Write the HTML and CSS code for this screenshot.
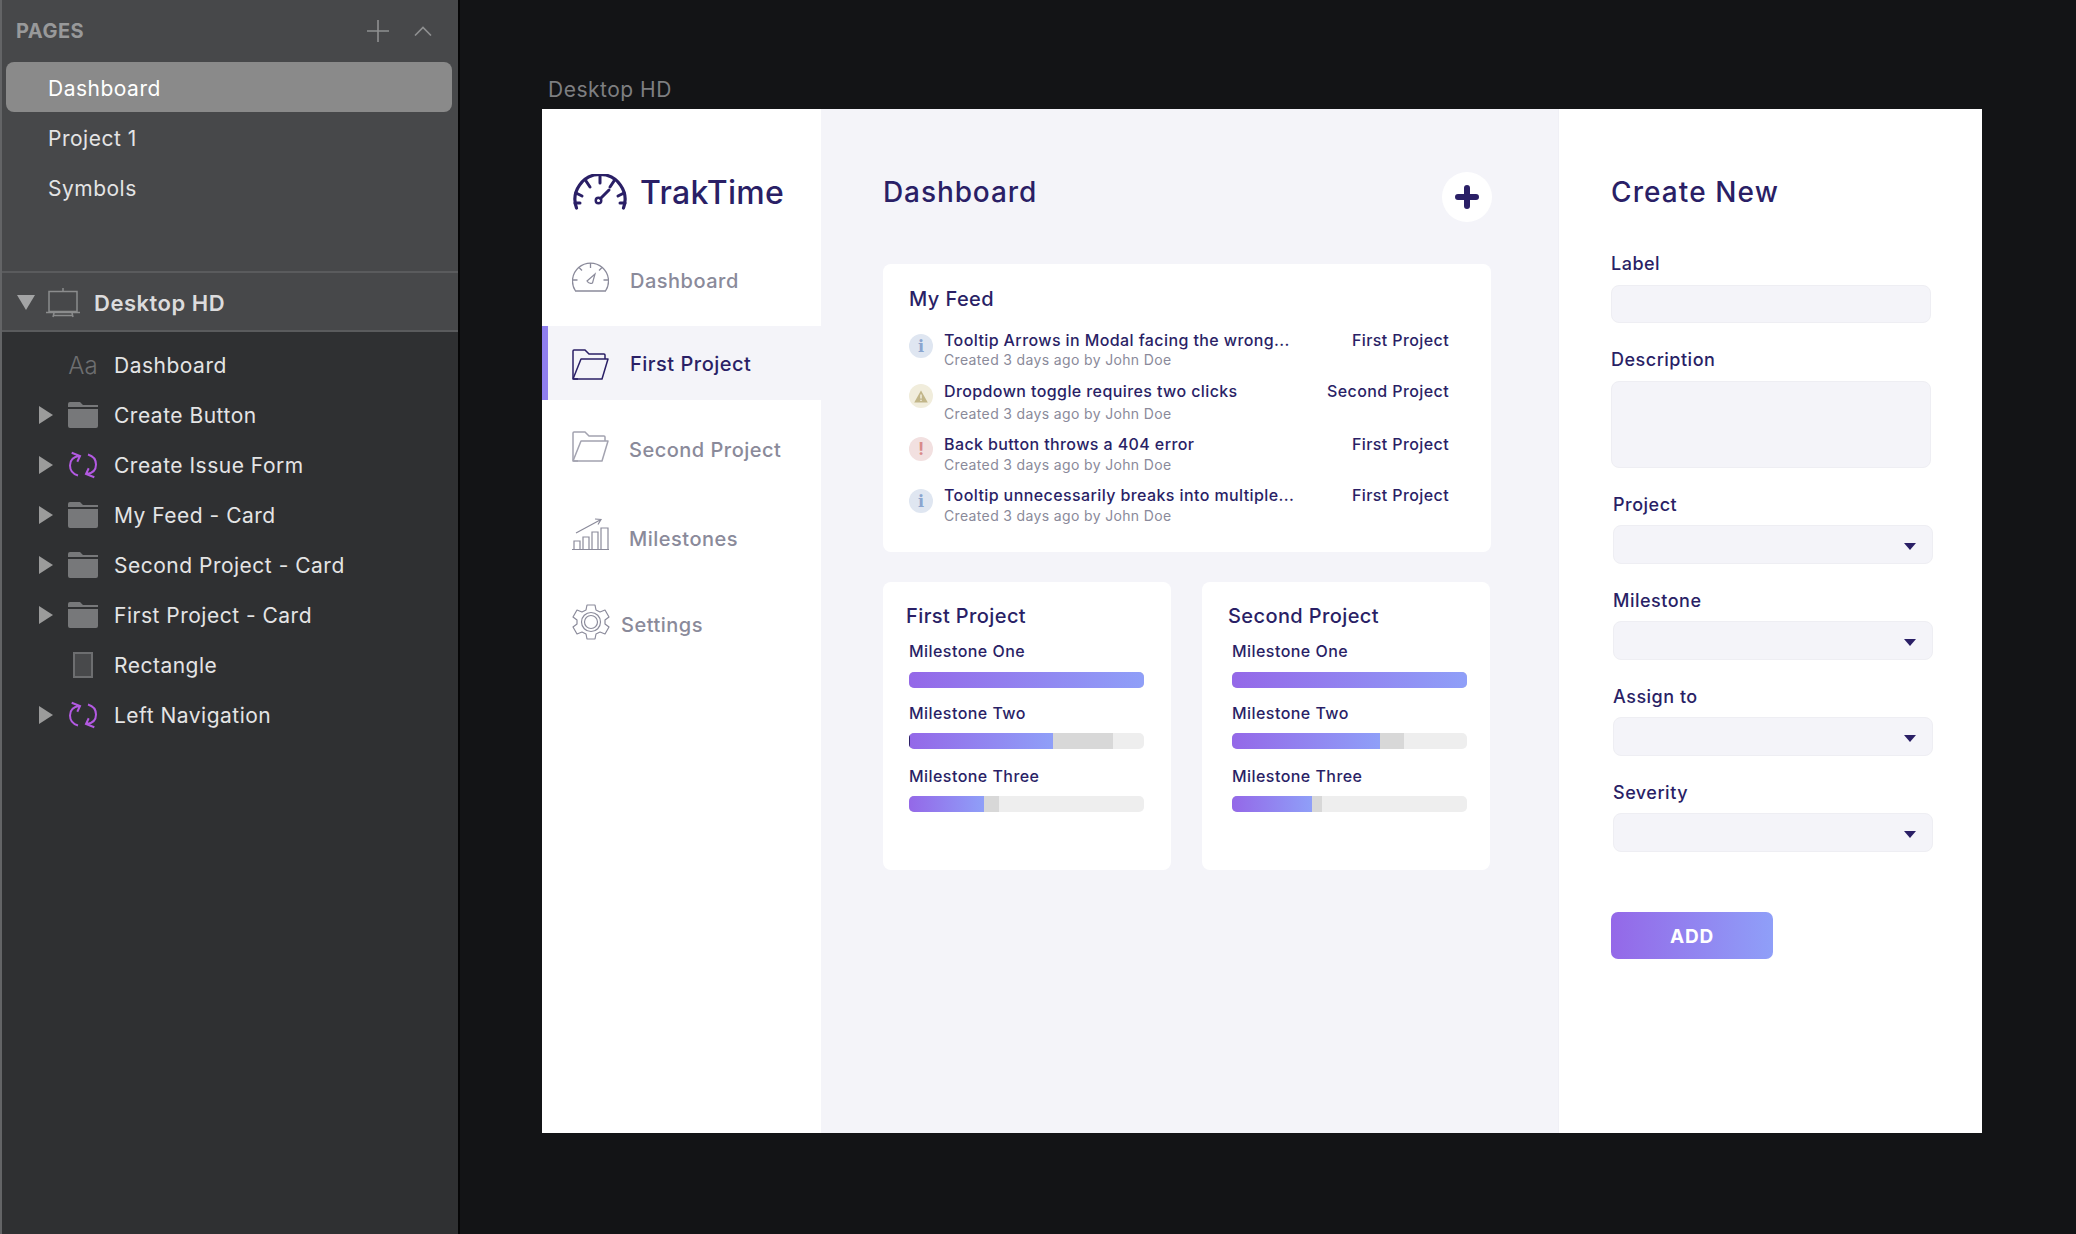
FILE: index.html
```html
<!DOCTYPE html>
<html lang="en">
<head>
    <meta charset="UTF-8">
    <meta name="viewport" content="width=device-width, initial-scale=1.0">
    <title>TrakTime - Desktop HD</title>
    <link rel="stylesheet" href="styles.css">
</head>
<body>
    <aside class="layers">
        <div class="pages">
            <div class="pages-head">
                <span class="pages-title">PAGES</span>
                <svg class="pages-plus" width="22" height="22" viewBox="0 0 22 22"><path d="M11 0V22M0 11H22" stroke="#8f9091" stroke-width="1.6" fill="none"/></svg>
                <svg class="pages-up" width="18" height="10" viewBox="0 0 18 10"><path d="M1 9.5L9 1.5L17 9.5" stroke="#8f9091" stroke-width="1.6" fill="none"/></svg>
            </div>
            <div class="page page-active">Dashboard</div>
            <div class="page">Project 1</div>
            <div class="page">Symbols</div>
        </div>
        <div class="artboard-row">
            <svg class="artboard-arrow" width="18" height="15" viewBox="0 0 18 15"><path d="M0 0H18L9 15Z" fill="#a3a4a5"/></svg>
            <svg class="artboard-icon" width="34" height="31" viewBox="0 0 34 31">
                <path d="M3 4.5H31V24.5H3Z" stroke="#8b8c8d" stroke-width="1.5" fill="none"/>
                <path d="M17 1V4M0 25.5H34M8 26L7 30M26 26L27 30M7.5 28.5H26.5" stroke="#8b8c8d" stroke-width="1.5" fill="none"/>
            </svg>
            <span>Desktop HD</span>
        </div>
        <ul class="tree">
            <li class="tree-row"><span class="tree-aa">Aa</span>Dashboard</li>
            <li class="tree-row has-arrow">
                <svg class="tree-icon" width="30" height="26" viewBox="0 0 30 26"><path d="M0 2Q0 0 2 0H12L15 3H30V5H0ZM0 7H30V24Q30 26 28 26H2Q0 26 0 24Z" fill="#77787a"/></svg>
                Create Button
            </li>
            <li class="tree-row has-arrow">
                <svg class="tree-icon" width="30" height="28" viewBox="0 0 30 28"><path d="M11 5C4 6 2 10 2 14.5C2 19 5 23 10 24.5M3.700 1.700L12 5L9.300 10.700M19 23C26 22 28 18 28 13.500C28 9 25 5 20 3.500M26.300 26.300L18 23L20.700 17.300" stroke="#b35ae2" stroke-width="2" fill="none"/></svg>
                Create Issue Form
            </li>
            <li class="tree-row has-arrow">
                <svg class="tree-icon" width="30" height="26" viewBox="0 0 30 26"><path d="M0 2Q0 0 2 0H12L15 3H30V5H0ZM0 7H30V24Q30 26 28 26H2Q0 26 0 24Z" fill="#77787a"/></svg>
                My Feed - Card
            </li>
            <li class="tree-row has-arrow">
                <svg class="tree-icon" width="30" height="26" viewBox="0 0 30 26"><path d="M0 2Q0 0 2 0H12L15 3H30V5H0ZM0 7H30V24Q30 26 28 26H2Q0 26 0 24Z" fill="#77787a"/></svg>
                Second Project - Card
            </li>
            <li class="tree-row has-arrow">
                <svg class="tree-icon" width="30" height="26" viewBox="0 0 30 26"><path d="M0 2Q0 0 2 0H12L15 3H30V5H0ZM0 7H30V24Q30 26 28 26H2Q0 26 0 24Z" fill="#77787a"/></svg>
                First Project - Card
            </li>
            <li class="tree-row"><span class="tree-rect"></span>Rectangle</li>
            <li class="tree-row has-arrow">
                <svg class="tree-icon" width="30" height="28" viewBox="0 0 30 28"><path d="M11 5C4 6 2 10 2 14.5C2 19 5 23 10 24.5M3.700 1.700L12 5L9.300 10.700M19 23C26 22 28 18 28 13.500C28 9 25 5 20 3.500M26.300 26.300L18 23L20.700 17.300" stroke="#b35ae2" stroke-width="2" fill="none"/></svg>
                Left Navigation
            </li>
        </ul>
    </aside>

    <main class="canvas">
        <div class="canvas-label">Desktop HD</div>
        <div class="board">
            <nav class="sidebar">
                <div class="logo">
                    <svg width="54" height="36" viewBox="0 0 54 36">
                        <path d="M3.500 34A25 25 0 1 1 50.500 34" stroke="#2a1f66" stroke-width="3.200" fill="none" stroke-linecap="round"/>
                        <path d="M27 2V9M13 7L17 13M41 7L37 13M3 19L9 22M51 19L45 22M2 29H7M52 29H47" stroke="#2a1f66" stroke-width="3" fill="none" stroke-linecap="round"/>
                        <circle cx="25.500" cy="26.500" r="2.800" stroke="#2a1f66" stroke-width="2.400" fill="none"/>
                        <path d="M27.500 24.500L36 16" stroke="#2a1f66" stroke-width="3" stroke-linecap="round"/>
                    </svg>
                    <span class="logo-name">TrakTime</span>
                </div>
                <a class="nav-item nav-dashboard">
                    <svg width="37" height="30" viewBox="0 0 37 30">
                        <path d="M3.500 29A18 18 0 1 1 33.500 29H3.500Z" stroke="#8b8b9b" stroke-width="1.300" fill="none"/>
                        <path d="M18.500 1V6M7 5.500L10 8.500M30 5.500L27 8.500M1 18H5.500M36 18H31.500" stroke="#8b8b9b" stroke-width="1.300" fill="none"/>
                        <path d="M15 19L23 12L20.500 21Q17 22.500 15 19Z" stroke="#8b8b9b" stroke-width="1.200" fill="none"/>
                    </svg>
                    <span>Dashboard</span>
                </a>
                <a class="nav-item nav-active">
                    <svg width="37" height="31" viewBox="0 0 37 31">
                        <path d="M6 30H2Q1 30 1 29V2Q1 1 2 1H13L17 5H32Q33 5 33 6V10" stroke="#2a1f66" stroke-width="1.500" fill="none"/>
                        <path d="M9 10H36L30 30H1Z" stroke="#2a1f66" stroke-width="1.500" fill="none" stroke-linejoin="round"/>
                    </svg>
                    <span>First Project</span>
                </a>
                <a class="nav-item nav-second">
                    <svg width="37" height="31" viewBox="0 0 37 31">
                        <path d="M6 30H2Q1 30 1 29V2Q1 1 2 1H13L17 5H32Q33 5 33 6V10" stroke="#a3a3b0" stroke-width="1.500" fill="none"/>
                        <path d="M9 10H36L30 30H1Z" stroke="#a3a3b0" stroke-width="1.500" fill="none" stroke-linejoin="round"/>
                    </svg>
                    <span>Second Project</span>
                </a>
                <a class="nav-item nav-milestones">
                    <svg width="37" height="32" viewBox="0 0 37 32">
                        <path d="M0 31.500H37M2 31V23H8V31M11 31V19H17V31M20 31V14H26V31M29 31V10H36V31" stroke="#8b8b9b" stroke-width="1.200" fill="none"/>
                        <path d="M4 15L29 1.500M23 1L29 1.500L26 6.500" stroke="#8b8b9b" stroke-width="1.200" fill="none"/>
                    </svg>
                    <span>Milestones</span>
                </a>
                <a class="nav-item nav-settings">
                    <svg width="38" height="36" viewBox="0 0 38 36">
                        <path d="M15 1H23L24 6L28 8L33 6L37 13L33 16V20L37 23L33 30L28 28L24 30L23 35H15L14 30L10 28L5 30L1 23L5 20V16L1 13L5 6L10 8L14 6Z" stroke="#8b8b9b" stroke-width="1.200" fill="none" stroke-linejoin="round"/>
                        <circle cx="19" cy="18" r="9.500" stroke="#8b8b9b" stroke-width="1.200" fill="none"/>
                        <circle cx="19" cy="18" r="6.500" stroke="#8b8b9b" stroke-width="1.200" fill="none"/>
                    </svg>
                    <span>Settings</span>
                </a>
            </nav>

            <section class="main">
                <div class="main-head">
                    <h1>Dashboard</h1>
                    <div class="add-round">
                        <svg width="24" height="24" viewBox="0 0 24 24"><path d="M12 3V21M3 12H21" stroke="#2a1f66" stroke-width="6" stroke-linecap="round"/></svg>
                    </div>
                </div>

                <div class="card feed">
                    <h2>My Feed</h2>
                    <div class="feed-row">
                        <span class="sev sev-info">i</span>
                        <div class="feed-text">
                            <div class="feed-title">Tooltip Arrows in Modal facing the wrong...</div>
                            <div class="feed-sub">Created 3 days ago by John Doe</div>
                        </div>
                        <div class="feed-project">First Project</div>
                    </div>
                    <div class="feed-row">
                        <span class="sev sev-warn">
                            <svg width="14" height="13" viewBox="0 0 14 13"><path d="M7 0.500L13.800 12.500H0.200Z" fill="#c2b689"/><path d="M7 4.500V8.500M7 9.800V11" stroke="#f1eddc" stroke-width="1.500"/></svg>
                        </span>
                        <div class="feed-text">
                            <div class="feed-title">Dropdown toggle requires two clicks</div>
                            <div class="feed-sub">Created 3 days ago by John Doe</div>
                        </div>
                        <div class="feed-project">Second Project</div>
                    </div>
                    <div class="feed-row">
                        <span class="sev sev-error">!</span>
                        <div class="feed-text">
                            <div class="feed-title">Back button throws a 404 error</div>
                            <div class="feed-sub">Created 3 days ago by John Doe</div>
                        </div>
                        <div class="feed-project">First Project</div>
                    </div>
                    <div class="feed-row">
                        <span class="sev sev-info">i</span>
                        <div class="feed-text">
                            <div class="feed-title">Tooltip unnecessarily breaks into multiple...</div>
                            <div class="feed-sub">Created 3 days ago by John Doe</div>
                        </div>
                        <div class="feed-project">First Project</div>
                    </div>
                </div>

                <div class="projects">
                    <div class="card project">
                        <h2>First Project</h2>
                        <div class="milestone">
                            <div class="milestone-name">Milestone One</div>
                            <div class="bar"><div class="bar-spent" style="width: 100%"></div><div class="bar-fill" style="width: 100%"></div></div>
                        </div>
                        <div class="milestone">
                            <div class="milestone-name">Milestone Two</div>
                            <div class="bar"><div class="bar-spent" style="width: 86.8%"></div><div class="bar-fill bar-nick" style="width: 61.3%"></div></div>
                        </div>
                        <div class="milestone">
                            <div class="milestone-name">Milestone Three</div>
                            <div class="bar"><div class="bar-spent" style="width: 38.3%"></div><div class="bar-fill" style="width: 31.9%"></div></div>
                        </div>
                    </div>
                    <div class="card project project-second">
                        <h2>Second Project</h2>
                        <div class="milestone">
                            <div class="milestone-name">Milestone One</div>
                            <div class="bar"><div class="bar-spent" style="width: 100%"></div><div class="bar-fill" style="width: 100%"></div></div>
                        </div>
                        <div class="milestone">
                            <div class="milestone-name">Milestone Two</div>
                            <div class="bar"><div class="bar-spent" style="width: 73.2%"></div><div class="bar-fill" style="width: 63%"></div></div>
                        </div>
                        <div class="milestone">
                            <div class="milestone-name">Milestone Three</div>
                            <div class="bar"><div class="bar-spent" style="width: 38.3%"></div><div class="bar-fill" style="width: 34%"></div></div>
                        </div>
                    </div>
                </div>
            </section>

            <section class="create">
                <h1>Create New</h1>
                <div class="field">
                    <label>Label</label>
                    <input class="control" type="text">
                </div>
                <div class="field">
                    <label>Description</label>
                    <textarea class="control control-area"></textarea>
                </div>
                <div class="field field-select">
                    <label>Project</label>
                    <div class="control select"><i class="caret"></i></div>
                </div>
                <div class="field field-select">
                    <label>Milestone</label>
                    <div class="control select"><i class="caret"></i></div>
                </div>
                <div class="field field-select">
                    <label>Assign to</label>
                    <div class="control select"><i class="caret"></i></div>
                </div>
                <div class="field field-select">
                    <label>Severity</label>
                    <div class="control select"><i class="caret"></i></div>
                </div>
                <button class="add-btn">ADD</button>
            </section>
        </div>
    </main>
</body>
</html>
```

FILE: styles.css
```css
* {
    box-sizing: border-box;
}
body {
    margin: 0;
    height: 1234px;
    display: flex;
    overflow: hidden;
    background: #131416;
    font-family: Inter, "Liberation Sans", sans-serif;
}

/* Left layer list */
.layers {
    width: 460px;
    flex-shrink: 0;
    background: #2f3032;
    border-left: 2px solid #636466;
    border-right: 2px solid #050506;
    color: #e4e4e5;
    font-size: 21px;
    letter-spacing: 0.5px;
}
.pages {
    height: 271px;
    background: #47484a;
    padding: 0 6px 0 4px;
}
.pages-head {
    height: 62px;
    display: flex;
    align-items: center;
    padding: 0 20px 0 10px;
    color: #98999a;
}
.pages-title {
    font-size: 20px;
    font-weight: 700;
    flex: 1;
    letter-spacing: 0.5px;
}
.pages-plus {
    margin-right: 25px;
}
.page {
    height: 50px;
    display: flex;
    align-items: center;
    padding: 2px 0 0 42px;
}
.page-active {
    background: #8a8a8a;
    border-radius: 8px;
    color: #fff;
}
.artboard-row {
    height: 61px;
    display: flex;
    align-items: center;
    background: #47484a;
    border-top: 2px solid #5a5b5d;
    border-bottom: 2px solid #5a5b5d;
    padding: 2px 0 0 15px;
    font-size: 22px;
    font-weight: 600;
    color: #dcdcdd;
}
.artboard-icon {
    margin: 0 14px 0 11px;
}
.tree {
    list-style: none;
    margin: 0;
    padding: 8px 0 0 66px;
}
.tree-row {
    position: relative;
    height: 50px;
    display: flex;
    align-items: center;
}
.tree-row.has-arrow::before {
    content: "";
    position: absolute;
    left: -29px;
    top: 16px;
    border-style: solid;
    border-width: 9px 0 9px 14px;
    border-color: transparent transparent transparent #9b9b9b;
}
.tree-icon {
    margin-right: 16px;
}
.tree-aa {
    width: 30px;
    margin-right: 16px;
    font-size: 24px;
    font-weight: 300;
    letter-spacing: 0;
    color: #6d6e70;
    text-align: center;
}
.tree-rect {
    width: 20px;
    height: 26px;
    margin: 0 21px 0 5px;
    background: #48494b;
    border: 2px solid #6d6e70;
}

/* Canvas and artboard */
.canvas {
    flex: 1;
    padding-left: 82px;
}
.canvas-label {
    height: 109px;
    padding: 76px 0 0 6px;
    font-size: 21px;
    line-height: 28px;
    letter-spacing: 0.5px;
    color: #7e7f81;
}
.board {
    width: 1440px;
    height: 1024px;
    display: flex;
    background: #fff;
    color: #2a1f66;
}
.sidebar {
    width: 279px;
    flex-shrink: 0;
}
.logo {
    height: 135px;
    padding: 65px 0 0 31px;
    display: flex;
    align-items: flex-start;
    gap: 13px;
    font-size: 32px;
    font-weight: 500;
    line-height: 36px;
    letter-spacing: 0.3px;
}
.logo-name {
    padding-top: 1px;
}
.nav-item {
    height: 74px;
    display: flex;
    align-items: center;
    gap: 21px;
    padding-left: 30px;
    font-size: 20px;
    font-weight: 500;
    letter-spacing: 0.5px;
    color: #8a8a9a;
}
.nav-dashboard svg {
    margin-top: -8px;
}
.nav-active {
    margin-top: 8px;
    background: #f4f4f9;
    border-left: 6px solid #8f7fee;
    padding: 2px 0 0 24px;
    color: #2a1f66;
}
.nav-second {
    margin-top: 13px;
    gap: 20px;
}
.nav-second svg {
    margin-top: -8px;
}
.nav-milestones {
    margin-top: 15px;
    gap: 20px;
}
.nav-milestones svg {
    margin-top: -10px;
}
.nav-settings {
    margin-top: 12px;
    gap: 11px;
}
.nav-settings svg {
    margin-top: -6px;
}

/* Dashboard column */
.main {
    width: 738px;
    flex-shrink: 0;
    background: #f4f4f9;
    border-right: 1px solid #f0f0f6;
    padding: 63px 0 0 62px;
}
.main h1,
.create h1 {
    margin: 0;
    font-size: 28px;
    font-weight: 500;
    line-height: 40px;
    letter-spacing: 0.9px;
}
.main-head {
    width: 609px;
    height: 50px;
    display: flex;
    justify-content: space-between;
}
.add-round {
    width: 50px;
    height: 50px;
    border-radius: 50%;
    background: #fff;
    display: flex;
    align-items: center;
    justify-content: center;
}
.card {
    background: #fff;
    border-radius: 8px;
}
.card h2 {
    margin: 0;
    font-size: 20px;
    font-weight: 500;
    line-height: 28px;
    letter-spacing: 0.4px;
}
.feed {
    width: 608px;
    height: 288px;
    margin-top: 42px;
    padding: 21px 42px 0 26px;
}
.feed h2 {
    margin-bottom: 18px;
}
.feed-row {
    display: flex;
    height: 50px;
}
.feed-row:nth-of-type(2) {
    height: 53px;
}
.feed-row:nth-of-type(3) {
    height: 52px;
}
.sev {
    width: 24px;
    height: 24px;
    margin: 3px 11px 0 0;
    border-radius: 50%;
    display: flex;
    align-items: center;
    justify-content: center;
    font-family: "DejaVu Serif", serif;
    font-size: 16px;
    font-weight: 700;
}
.sev-info {
    background: #dfe6f1;
    color: #8ba5cf;
}
.sev-warn {
    background: #f1eddc;
}
.sev-error {
    background: #f2e0e0;
    color: #d98a8a;
    font-family: Inter, sans-serif;
    font-size: 17px;
}
.feed-text {
    flex: 1;
}
.feed-title,
.feed-project {
    font-size: 16px;
    line-height: 18px;
    font-weight: 500;
    letter-spacing: 0.4px;
}
.feed-sub {
    margin-top: 2px;
    font-size: 14px;
    line-height: 18px;
    letter-spacing: 0.35px;
    color: #8a8a9a;
}
.feed-row:nth-of-type(2) .feed-title,
.feed-row:nth-of-type(2) .feed-project,
.feed-row:nth-of-type(3) .feed-title,
.feed-row:nth-of-type(3) .feed-project {
    margin-top: 1px;
}
.feed-row:nth-of-type(2) .feed-sub {
    margin-top: 5px;
}
.feed-row:nth-of-type(3) .feed-sub {
    margin-top: 3px;
}
.feed-row:nth-of-type(4) .feed-sub {
    margin-top: 3px;
}
.projects {
    width: 608px;
    margin-top: 30px;
    display: flex;
    gap: 31px;
}
.project {
    width: 288px;
    height: 288px;
    padding: 20px 0 0 23px;
}
.project-second {
    padding-left: 26px;
}
.project-second .milestone {
    margin-left: 4px;
}
.milestone {
    margin-left: 3px;
}
.project h2 + .milestone {
    margin-top: 11px;
}
.project h2 + .milestone .bar {
    margin-top: 11px;
}
.milestone + .milestone {
    margin-top: 15px;
}
.milestone:last-child {
    margin-top: 17px;
}
.milestone-name {
    font-size: 16px;
    line-height: 20px;
    font-weight: 500;
    letter-spacing: 0.45px;
}
.bar {
    position: relative;
    width: 235px;
    height: 16px;
    margin-top: 10px;
    background: #eeeeee;
    border-radius: 5px;
    overflow: hidden;
}
.bar-spent {
    position: absolute;
    top: 0;
    bottom: 0;
    left: 0;
    background: #d8d8d8;
}
.bar-fill {
    position: absolute;
    top: 0;
    bottom: 0;
    left: 0;
    background: linear-gradient(to right, #9468e8, #8f9ff8);
}
.bar-nick {
    box-shadow: inset 1px 0 0 #2a1f66;
}

/* Create form */
.create {
    flex: 1;
    padding: 63px 0 0 52px;
}
.create h1 {
    letter-spacing: 1.1px;
}
.field {
    margin-top: 25px;
}
.create h1 + .field {
    margin-top: 40px;
}
.field label {
    display: block;
    font-size: 18px;
    font-weight: 500;
    line-height: 24px;
    letter-spacing: 0.5px;
    margin-bottom: 9px;
}
.control {
    display: block;
    width: 320px;
    height: 38px;
    background: #f4f4f9;
    border: 1px solid #eeeef3;
    border-radius: 8px;
    outline: none;
    resize: none;
}
.control-area {
    height: 87px;
}
.field-select {
    margin-left: 2px;
}
.field-select label {
    margin-bottom: 8px;
}
.select {
    height: 39px;
    display: flex;
    align-items: center;
    justify-content: flex-end;
    padding-right: 16px;
}
.caret {
    margin-top: 3px;
    border-style: solid;
    border-width: 7px 6px 0 6px;
    border-color: #2a1f66 transparent transparent transparent;
}
.add-btn {
    display: block;
    width: 162px;
    height: 47px;
    margin-top: 60px;
    padding-top: 3px;
    border: none;
    border-radius: 7px;
    background: linear-gradient(to right, #9468e8, #8f9ff8);
    color: #fff;
    font-family: Inter, sans-serif;
    font-size: 19px;
    font-weight: 700;
    letter-spacing: 0.8px;
}
```
